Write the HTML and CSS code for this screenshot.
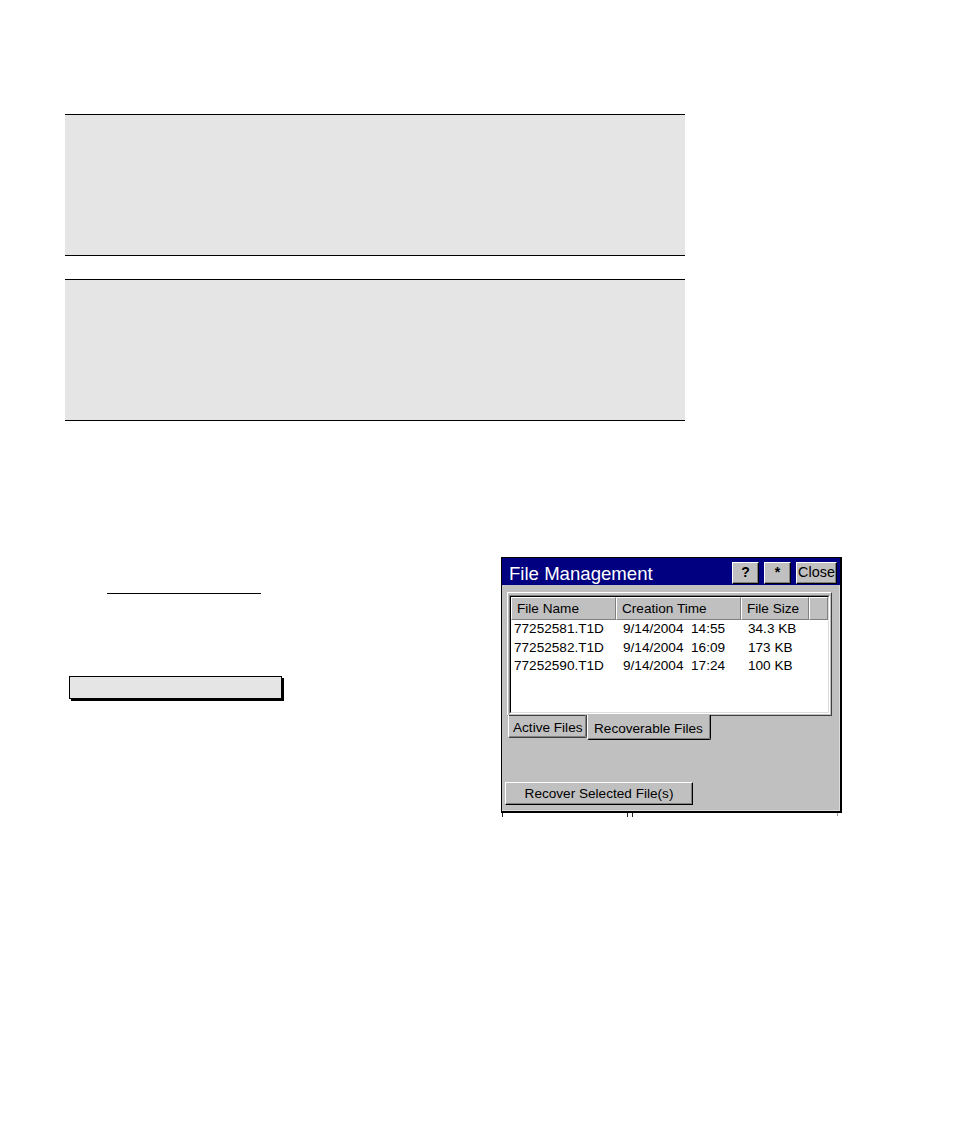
FILE: index.html
```html
<!DOCTYPE html>
<html>
<head>
<meta charset="utf-8">
<link rel="stylesheet" href="styles.css">
</head>
<body>
<div class="page">
  <div class="band"></div>
  <div class="band band2"></div>
  <div class="lower">
    <div class="left">
      <div class="rule"></div>
      <div class="field"></div>
    </div>
    <div class="dialog-wrap">
      <div class="dialog">
        <div class="titlebar">
          <span class="title">File Management</span>
          <div class="tbtns">
            <span class="tbtn q">?</span>
            <span class="tbtn star">*</span>
            <span class="tbtn close">Close</span>
          </div>
        </div>
        <div class="panel">
          <div class="list">
            <div class="list-inner">
              <div class="header">
                <div class="hc c1">File Name</div>
                <div class="hc c2">Creation Time</div>
                <div class="hc c3">File Size</div>
                <div class="hc c4"></div>
              </div>
              <div class="row">
                <div class="rc c1">77252581.T1D</div>
                <div class="rc c2">9/14/2004  14:55</div>
                <div class="rc c3">34.3 KB</div>
              </div>
              <div class="row">
                <div class="rc c1">77252582.T1D</div>
                <div class="rc c2">9/14/2004  16:09</div>
                <div class="rc c3">173 KB</div>
              </div>
              <div class="row">
                <div class="rc c1">77252590.T1D</div>
                <div class="rc c2">9/14/2004  17:24</div>
                <div class="rc c3">100 KB</div>
              </div>
            </div>
          </div>
        </div>
        <div class="tabs">
          <div class="tab">Active Files</div>
          <div class="tab sel">Recoverable Files</div>
        </div>
        <div class="action">
          <div class="btn">Recover Selected File(s)</div>
        </div>
      </div>
      <div class="ticks">
        <span class="tick t1"></span>
        <span class="tick t2"></span>
        <span class="tick t3"></span>
        <span class="tick t4"></span>
      </div>
    </div>
  </div>
</div>
</body>
</html>
```

FILE: styles.css
```css
html, body {
  margin: 0;
  padding: 0;
  background: #fff;
}

.page {
  padding-top: 114px;
}

.band {
  margin-left: 65px;
  width: 620px;
  height: 140px;
  background: #e5e5e5;
  border-top: 1px solid #000;
  border-bottom: 1px solid #000;
}

.band2 {
  margin-top: 23px;
}

.lower {
  display: flex;
  margin-top: 136px;
}

.left {
  width: 501px;
  padding-top: 36px;
}

.rule {
  margin-left: 107px;
  width: 154px;
  border-top: 1px solid #000;
}

.field {
  margin-left: 69px;
  margin-top: 82px;
  width: 211px;
  height: 21px;
  border: 1px solid #000;
  box-shadow: 2px 2px 0 #000;
  background: #e5e5e5;
}

.dialog-wrap {
  display: flex;
  flex-direction: column;
}

.dialog {
  width: 341px;
  height: 256px;
  box-sizing: border-box;
  border-style: solid;
  border-color: #000;
  border-width: 1px 2px 2px 1px;
  background: #c0c0c0;
  box-shadow: inset -1px -1px 0 #dcdcdc;
  font-family: "Liberation Sans", Arial, sans-serif;
  color: #000;
  display: flex;
  flex-direction: column;
}

.titlebar {
  height: 27px;
  background: #000080;
  display: flex;
  align-items: flex-start;
}

.title {
  color: #fff;
  font-size: 18.6px;
  line-height: 20px;
  padding-top: 6px;
  padding-left: 7px;
}

.tbtns {
  margin-left: auto;
  margin-right: 3px;
  margin-top: 4px;
  display: flex;
  gap: 5px;
}

.tbtn {
  box-sizing: border-box;
  height: 22px;
  background: #c0c0c0;
  border: 1px solid;
  border-color: #fff #000 #000 #fff;
  box-shadow: inset -1px -1px 0 #808080;
  font-size: 14px;
  line-height: 19px;
  text-align: center;
}

.q, .star {
  width: 27px;
  font-weight: bold;
}

.close {
  width: 41px;
  font-size: 14.4px;
}

.panel {
  margin-left: 5px;
  margin-top: 7px;
  width: 325px;
  height: 124px;
  box-sizing: border-box;
  border: 1px solid;
  border-color: #fff #404040 #404040 #fff;
  padding: 2px 1px 1px 1px;
}

.list {
  box-sizing: border-box;
  height: 100%;
  border: 1px solid;
  border-color: #808080 #fff #fff #808080;
}

.list-inner {
  box-sizing: border-box;
  height: 100%;
  border: 1px solid;
  border-color: #000 #dcdcdc #dcdcdc #000;
  background: #fff;
  font-size: 13.6px;
}

.header {
  display: flex;
  height: 23px;
  background: #c0c0c0;
}

.hc {
  box-sizing: border-box;
  height: 23px;
  border: 1px solid;
  border-color: #fff #808080 #808080 #fff;
  padding-left: 5px;
  line-height: 21px;
  white-space: nowrap;
}

.c1 { width: 105px; }
.c2 { width: 125px; }
.c3 { width: 68px; }
.hc.c4 { flex: 1; }

.row {
  display: flex;
  height: 18.5px;
  line-height: 18.5px;
}

.row:first-of-type {
  margin-top: 1px;
}

.rc {
  white-space: pre;
  padding-left: 7px;
  box-sizing: border-box;
}

.rc.c1 {
  padding-left: 3px;
}

.tabs {
  display: flex;
  margin-top: -1px;
  margin-left: 6px;
  font-size: 13.6px;
  align-items: flex-start;
}

.tab {
  box-sizing: border-box;
  height: 23px;
  width: 79px;
  border-left: 1px solid #fff;
  border-right: 1px solid #404040;
  border-bottom: 1px solid #404040;
  border-bottom-left-radius: 2px;
  border-bottom-right-radius: 2px;
  box-shadow: inset -1px -1px 0 #808080;
  padding-left: 4px;
  padding-top: 3px;
  line-height: 20px;
}

.tab.sel {
  width: 124px;
  height: 25px;
  background: #c0c0c0;
  border-right-color: #000;
  border-bottom-color: #000;
  padding-left: 6px;
  padding-top: 2px;
  line-height: 23px;
  position: relative;
  z-index: 1;
}

.action {
  margin-top: 42px;
  margin-left: 3px;
}

.btn {
  box-sizing: border-box;
  width: 188px;
  height: 23px;
  border: 1px solid;
  border-color: #fff #000 #000 #fff;
  box-shadow: inset -1px -1px 0 #808080;
  font-size: 13.6px;
  line-height: 21px;
  text-align: center;
}

.ticks {
  display: flex;
  height: 4px;
}

.tick {
  width: 1px;
  height: 4px;
  background: #222;
}

.t1 { margin-left: 1px; }
.t2 { margin-left: 124px; }
.t3 { margin-left: 4px; }
.t4 { margin-left: 204px; background: #999; height: 3px; }
```
